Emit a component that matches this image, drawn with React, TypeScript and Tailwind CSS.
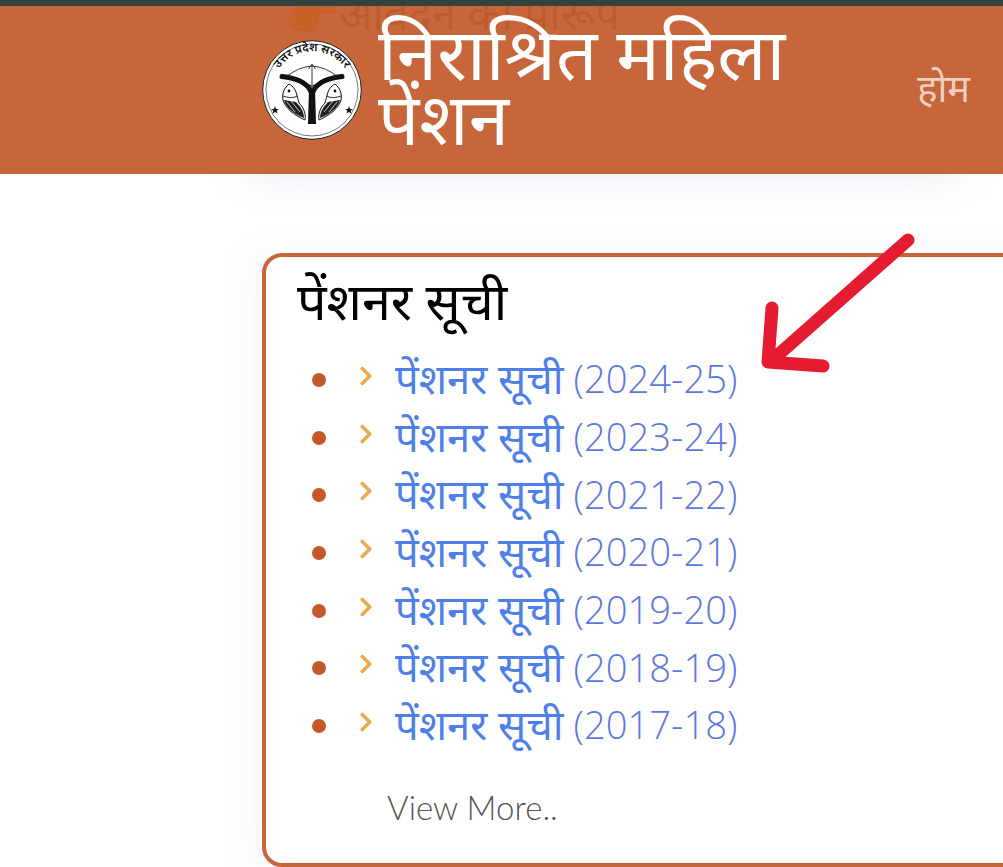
import { ChevronRight } from 'lucide-react'

const years = ['2024-25', '2023-24', '2021-22', '2020-21', '2019-20', '2018-19', '2017-18']

function Logo() {
  return (
    <svg viewBox="0 0 100 100" className="w-[100px] h-[100px] shrink-0">
      <defs>
        <path id="sealText" d="M 11.5 62 A 40 40 0 1 1 88.5 62" />
      </defs>
      <circle cx="50" cy="50" r="49.3" fill="#fff" stroke="#222" strokeWidth="1" />
      <circle cx="50" cy="50" r="46" fill="none" stroke="#222" strokeWidth="0.6" />
      <text fontSize="11.5" fontWeight="600" fill="#111" fontFamily="'Noto Sans', sans-serif">
        <textPath href="#sealText" startOffset="50%" textAnchor="middle">उत्तर प्रदेश सरकार</textPath>
      </text>
      {/* bow */}
      <path d="M24 37 Q36 27 50 26 Q64 27 76 37 M50 26 L50 50 M46.5 29 L50 24 L53.5 29 M24 37 L50 46 L76 37" fill="none" stroke="#222" strokeWidth="0.9" />
      {/* Y shaped grip */}
      <path d="M20 36.5 C32 38 46 41 50 54 C54 41 68 38 80 36.5" fill="none" stroke="#111" strokeWidth="5" strokeLinecap="round" />
      <path d="M47 48 L53 48 L54 84 L46 84 Z" fill="#111" />
      {/* fish */}
      <path d="M27 44 C21 49 20 55 21 60 C23 68 32 75 43 80 C44 74 42 68 37 63 C36 60 36 58 35 56 C34 50 31 46 27 44 Z" fill="#fff" stroke="#111" strokeWidth="1" />
      <path d="M21 56 C26 58 32 58 35.5 56" fill="none" stroke="#111" strokeWidth="0.9" />
      <path d="M22 60 C24 68 32 74 42 78 C42 72 39 67 34 62 Z" fill="#222" />
      <path d="M25 62 L33 72 M29 61 L38 72" stroke="#fff" strokeWidth="0.7" />
      <path d="M73 44 C79 49 80 55 79 60 C77 68 68 75 57 80 C56 74 58 68 63 63 C64 60 64 58 65 56 C66 50 69 46 73 44 Z" fill="#fff" stroke="#111" strokeWidth="1" />
      <path d="M79 56 C74 58 68 58 64.5 56" fill="none" stroke="#111" strokeWidth="0.9" />
      <path d="M78 60 C76 68 68 74 58 78 C58 72 61 67 66 62 Z" fill="#222" />
      <path d="M75 62 L67 72 M71 61 L62 72" stroke="#fff" strokeWidth="0.7" />
      <circle cx="27" cy="51" r="1.4" fill="#111" />
      <circle cx="73" cy="51" r="1.4" fill="#111" />
      <path d="M13 66 L14 69 L17 69 L14.6 70.8 L15.5 73.6 L13 72 L10.5 73.6 L11.4 70.8 L9 69 L12 69 Z" fill="#111" />
      <path d="M87 66 L88 69 L91 69 L88.6 70.8 L89.5 73.6 L87 72 L84.5 73.6 L85.4 70.8 L83 69 L86 69 Z" fill="#111" />
    </svg>
  )
}

export default function App() {
  return (
    <div className="relative h-[867px] w-[1003px] overflow-hidden bg-white font-['Noto_Sans',sans-serif]">
      {/* page content scrolled behind the translucent header */}
      <div className="absolute left-[247px] top-[-40px] h-[192px] w-[714px] rounded-[20px] bg-white shadow-[0_16px_48px_rgba(180,190,215,0.45)]">
        <span className="absolute left-[37px] top-[28px] text-[44px] leading-[50px] whitespace-nowrap text-[#666]">👉आवेदन का प्रारूप</span>
      </div>

      <div className="relative h-[6px] bg-[#334340]" />

      <header className="relative h-[168px] bg-[#c45a2c]/93">
        <div className="flex h-full items-center pl-[262px] pr-[33px]">
          <Logo />
          <h1 className="ml-[16px] mt-[-12px] w-[440px] text-[72.7px] leading-[65px] text-white">निराश्रित महिला पेंशन</h1>
          <a className="ml-auto mt-[-6px] text-[38px] text-white/70">होम</a>
        </div>
      </header>

      <main className="relative pl-[262px] pt-[79px]">
        <section className="h-[614px] w-[800px] rounded-[20px] border-4 border-[#c8663b] bg-white pl-[31px] shadow-[-10px_0_30px_rgba(200,210,230,0.2)]">
          <h2 className="mt-[12px] text-[52px] leading-[62px] text-black">पेंशनर सूची</h2>
          <ul className="mt-[20px]">
            {years.map(y => (
              <li key={y} className="flex h-[57.7px] items-center">
                <span className="ml-[15px] h-[14px] w-[14px] rounded-full bg-[#c4582a]" />
                <ChevronRight className="ml-[25px] mt-[-8px] h-[30px] w-[30px] text-[#e5ad50]" strokeWidth={3} />
                <a className="ml-[14px] mt-[-4px] text-[41.7px] leading-[50px] text-[#4f7fe8] whitespace-nowrap">पेंशनर सूची</a>
                <span className="ml-[10px] mt-[-2px] font-['Open_Sans',sans-serif] text-[38.2px] font-light text-[#5c78de] whitespace-nowrap">({y})</span>
              </li>
            ))}
          </ul>
          <p className="mt-[28px] pl-[90px] font-['Lato',sans-serif] text-[33px] font-light text-[#555]">View More..</p>
        </section>
      </main>

      <svg viewBox="0 0 263 180" className="absolute left-[740px] top-[220px] h-[180px] w-[263px]">
        <path d="M168 20 L30 142 M32 88 L28 142 L83 146" fill="none" stroke="#e51b32" strokeWidth="13" strokeLinecap="round" strokeLinejoin="round" />
      </svg>
    </div>
  )
}
